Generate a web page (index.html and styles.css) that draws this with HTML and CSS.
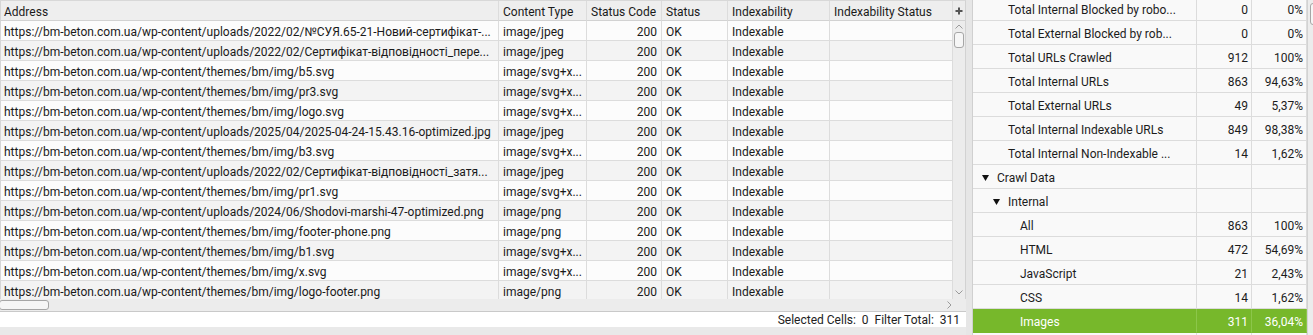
FILE: index.html
```html
<!DOCTYPE html>
<html lang="en">
<head>
  <meta charset="UTF-8" />
  <meta name="viewport" content="width=device-width, initial-scale=1.0" />
  <title>Crawl Results</title>
  <link rel="stylesheet" href="styles.css">
</head>
<body>
  <div class="app">
    <!-- Results table -->
    <section class="results">
      <div class="grid-area">
        <div class="grid">
          <div class="row head">
            <div class="cell">Address</div>
            <div class="cell">Content Type</div>
            <div class="cell">Status Code</div>
            <div class="cell">Status</div>
            <div class="cell">Indexability</div>
            <div class="cell">Indexability Status</div>
          </div>
          <div class="row">
            <div class="cell">https://bm-beton.com.ua/wp-content/uploads/2022/02/№СУЯ.65-21-Новий-сертифікат-...</div>
            <div class="cell">image/jpeg</div><div class="cell num">200</div><div class="cell">OK</div><div class="cell">Indexable</div><div class="cell"></div>
          </div>
          <div class="row">
            <div class="cell">https://bm-beton.com.ua/wp-content/uploads/2022/02/Сертифікат-відповідності_пере...</div>
            <div class="cell">image/jpeg</div><div class="cell num">200</div><div class="cell">OK</div><div class="cell">Indexable</div><div class="cell"></div>
          </div>
          <div class="row">
            <div class="cell">https://bm-beton.com.ua/wp-content/themes/bm/img/b5.svg</div>
            <div class="cell">image/svg+x...</div><div class="cell num">200</div><div class="cell">OK</div><div class="cell">Indexable</div><div class="cell"></div>
          </div>
          <div class="row">
            <div class="cell">https://bm-beton.com.ua/wp-content/themes/bm/img/pr3.svg</div>
            <div class="cell">image/svg+x...</div><div class="cell num">200</div><div class="cell">OK</div><div class="cell">Indexable</div><div class="cell"></div>
          </div>
          <div class="row">
            <div class="cell">https://bm-beton.com.ua/wp-content/themes/bm/img/logo.svg</div>
            <div class="cell">image/svg+x...</div><div class="cell num">200</div><div class="cell">OK</div><div class="cell">Indexable</div><div class="cell"></div>
          </div>
          <div class="row">
            <div class="cell">https://bm-beton.com.ua/wp-content/uploads/2025/04/2025-04-24-15.43.16-optimized.jpg</div>
            <div class="cell">image/jpeg</div><div class="cell num">200</div><div class="cell">OK</div><div class="cell">Indexable</div><div class="cell"></div>
          </div>
          <div class="row">
            <div class="cell">https://bm-beton.com.ua/wp-content/themes/bm/img/b3.svg</div>
            <div class="cell">image/svg+x...</div><div class="cell num">200</div><div class="cell">OK</div><div class="cell">Indexable</div><div class="cell"></div>
          </div>
          <div class="row">
            <div class="cell">https://bm-beton.com.ua/wp-content/uploads/2022/02/Сертифікат-відповідності_затя...</div>
            <div class="cell">image/jpeg</div><div class="cell num">200</div><div class="cell">OK</div><div class="cell">Indexable</div><div class="cell"></div>
          </div>
          <div class="row">
            <div class="cell">https://bm-beton.com.ua/wp-content/themes/bm/img/pr1.svg</div>
            <div class="cell">image/svg+x...</div><div class="cell num">200</div><div class="cell">OK</div><div class="cell">Indexable</div><div class="cell"></div>
          </div>
          <div class="row">
            <div class="cell">https://bm-beton.com.ua/wp-content/uploads/2024/06/Shodovi-marshi-47-optimized.png</div>
            <div class="cell">image/png</div><div class="cell num">200</div><div class="cell">OK</div><div class="cell">Indexable</div><div class="cell"></div>
          </div>
          <div class="row">
            <div class="cell">https://bm-beton.com.ua/wp-content/themes/bm/img/footer-phone.png</div>
            <div class="cell">image/png</div><div class="cell num">200</div><div class="cell">OK</div><div class="cell">Indexable</div><div class="cell"></div>
          </div>
          <div class="row">
            <div class="cell">https://bm-beton.com.ua/wp-content/themes/bm/img/b1.svg</div>
            <div class="cell">image/svg+x...</div><div class="cell num">200</div><div class="cell">OK</div><div class="cell">Indexable</div><div class="cell"></div>
          </div>
          <div class="row">
            <div class="cell">https://bm-beton.com.ua/wp-content/themes/bm/img/x.svg</div>
            <div class="cell">image/svg+x...</div><div class="cell num">200</div><div class="cell">OK</div><div class="cell">Indexable</div><div class="cell"></div>
          </div>
          <div class="row">
            <div class="cell">https://bm-beton.com.ua/wp-content/themes/bm/img/logo-footer.png</div>
            <div class="cell">image/png</div><div class="cell num">200</div><div class="cell">OK</div><div class="cell">Indexable</div><div class="cell"></div>
          </div>
        </div>
        <!-- Vertical scrollbar -->
        <div class="vscroll">
          <div class="corner">
            <svg width="8" height="8" viewBox="0 0 8 8"><path d="M4 0.5v7M0.5 4h7" stroke="#555" stroke-width="2"/></svg>
          </div>
          <div class="track">
            <svg class="chev" width="8" height="5" viewBox="0 0 8 5"><polyline points="0.5,4.5 4,1 7.5,4.5" fill="none" stroke="#9a9a9a"/></svg>
            <span class="thumb"></span>
            <span class="spacer"></span>
            <svg class="chev" width="8" height="5" viewBox="0 0 8 5"><polyline points="0.5,0.5 4,4 7.5,0.5" fill="none" stroke="#9a9a9a"/></svg>
          </div>
        </div>
      </div>
      <!-- Horizontal scrollbar -->
      <div class="hscroll">
        <span class="thumb"></span>
        <svg class="chev" width="5" height="8" viewBox="0 0 5 8"><polyline points="0.5,0.5 4,4 0.5,7.5" fill="none" stroke="#9a9a9a"/></svg>
      </div>
      <div class="statusbar">Selected Cells:&nbsp; 0 &nbsp;Filter Total:&nbsp; 311</div>
    </section>

    <div class="splitter"></div>

    <!-- Overview tree -->
    <section class="overview">
      <div class="tree">
        <div class="trow"><div class="tcell l1">Total Internal Blocked by robo...</div><div class="tcell num">0</div><div class="tcell num">0%</div></div>
        <div class="trow"><div class="tcell l1">Total External Blocked by rob...</div><div class="tcell num">0</div><div class="tcell num">0%</div></div>
        <div class="trow"><div class="tcell l1">Total URLs Crawled</div><div class="tcell num">912</div><div class="tcell num">100%</div></div>
        <div class="trow"><div class="tcell l1">Total Internal URLs</div><div class="tcell num">863</div><div class="tcell num">94,63%</div></div>
        <div class="trow"><div class="tcell l1">Total External URLs</div><div class="tcell num">49</div><div class="tcell num">5,37%</div></div>
        <div class="trow"><div class="tcell l1">Total Internal Indexable URLs</div><div class="tcell num">849</div><div class="tcell num">98,38%</div></div>
        <div class="trow"><div class="tcell l1">Total Internal Non-Indexable ...</div><div class="tcell num">14</div><div class="tcell num">1,62%</div></div>
        <div class="trow"><div class="tcell g0"><span class="toggle"><svg width="7" height="6" viewBox="0 0 7 6"><polygon points="0,0 7,0 3.5,6" fill="#111"/></svg></span>Crawl Data</div><div class="tcell"></div><div class="tcell"></div></div>
        <div class="trow"><div class="tcell g1"><span class="toggle"><svg width="7" height="6" viewBox="0 0 7 6"><polygon points="0,0 7,0 3.5,6" fill="#111"/></svg></span>Internal</div><div class="tcell"></div><div class="tcell"></div></div>
        <div class="trow"><div class="tcell l2">All</div><div class="tcell num">863</div><div class="tcell num">100%</div></div>
        <div class="trow"><div class="tcell l2">HTML</div><div class="tcell num">472</div><div class="tcell num">54,69%</div></div>
        <div class="trow"><div class="tcell l2">JavaScript</div><div class="tcell num">21</div><div class="tcell num">2,43%</div></div>
        <div class="trow"><div class="tcell l2">CSS</div><div class="tcell num">14</div><div class="tcell num">1,62%</div></div>
        <div class="trow selected"><div class="tcell l2">Images</div><div class="tcell num">311</div><div class="tcell num">36,04%</div></div>
        <div class="trow"><div class="tcell l2"></div><div class="tcell"></div><div class="tcell"></div></div>
      </div>
      <div class="rscroll"><span class="thumb"></span></div>
    </section>
  </div>
</body>
</html>
```

FILE: styles.css
```css
/* Global */
body {
  margin: 0;
  height: 335px;
  overflow: hidden;
  background-color: #e9e9e9;
  font-family: Roboto, "Noto Sans", Arial, sans-serif;
  font-size: 12px;
  color: #1a1a1a;
}
.app {
  display: flex;
  height: 335px;
}
/* Results table */
.results {
  width: 966px;
  flex: none;
  display: flex;
  flex-direction: column;
}
.grid-area {
  display: flex;
  height: 299px;
  overflow: hidden;
}
.grid {
  width: 953px;
  flex: none;
  border-top: 1px solid #d8d8d8;
  background-color: #fcfcfc;
}
.row {
  display: grid;
  grid-template-columns: 499px 88px 75px 66px 102px 123px;
  height: 20px;
}
.row:nth-child(odd) {
  background-color: #f3f3f3;
}
.row.head {
  height: 20px;
  background-color: #eeeeee;
}
.cell {
  box-sizing: border-box;
  height: 20px;
  line-height: 22px;
  padding: 0 4px 0 3px;
  border-right: 1px solid #dcdcdc;
  border-bottom: 1px solid #dcdcdc;
  white-space: nowrap;
  overflow: hidden;
}
.row .cell:first-child {
  border-left: 1px solid #d6d6d6;
}
.row .cell:nth-child(n+2) {
  padding-left: 4px;
}
.head .cell {
  border-bottom-color: #d2d2d2;
}
.cell.num {
  text-align: right;
}
/* Vertical scrollbar */
.vscroll {
  width: 13px;
  flex: none;
  display: flex;
  flex-direction: column;
  background-color: #ececec;
}
.corner {
  box-sizing: border-box;
  height: 21px;
  border-top: 1px solid #d8d8d8;
  border-bottom: 1px solid #d2d2d2;
  border-right: 1px solid #d2d2d2;
  display: flex;
  align-items: center;
  justify-content: center;
}
.track {
  flex: 1;
  display: flex;
  flex-direction: column;
  align-items: center;
  padding: 3px 0 4px;
  border-right: 1px solid #d2d2d2;
}
.track .thumb {
  box-sizing: border-box;
  width: 10px;
  height: 16px;
  margin-top: 3px;
  border: 1px solid #a6a6a6;
  border-radius: 3px;
  background-color: #f6f6f6;
}
.track .spacer {
  flex: 1;
}
.chev {
  display: block;
  flex: none;
}
/* Horizontal scrollbar */
.hscroll {
  height: 12px;
  display: flex;
  align-items: center;
  justify-content: space-between;
  padding-right: 14px;
  background-color: #ececec;
  border-bottom: 1px solid #c9c9c9;
}
.hscroll .thumb {
  box-sizing: border-box;
  width: 50px;
  height: 10px;
  margin-left: -1px;
  border: 1px solid #a6a6a6;
  border-radius: 3px;
  background-color: #f6f6f6;
}
/* Status bar */
.statusbar {
  height: 15px;
  line-height: 17px;
  padding-right: 6px;
  text-align: right;
  background-color: #ffffff;
  color: #222;
}
.splitter {
  width: 6px;
  flex: none;
  background-color: #e6e6e6;
}
/* Overview tree */
.overview {
  flex: 1;
  display: flex;
  border-left: 1px solid #d0d0d0;
  background-color: #f9f9f9;
  overflow: hidden;
}
.tree {
  width: 334px;
  flex: none;
  margin-top: -3px;
}
.trow {
  display: grid;
  grid-template-columns: 224px 55px 55px;
  height: 24px;
}
.tcell {
  box-sizing: border-box;
  height: 24px;
  line-height: 26px;
  padding: 0 3px;
  border-right: 1px solid #dcdcdc;
  border-bottom: 1px solid #dcdcdc;
  white-space: nowrap;
  overflow: hidden;
  color: #1c1c1c;
}
.tcell.num {
  text-align: right;
}
.tcell.l1 {
  padding-left: 35px;
}
.tcell.l2 {
  padding-left: 47px;
}
.tcell.g0 {
  padding-left: 9px;
}
.tcell.g1 {
  padding-left: 20px;
}
.toggle {
  display: inline-block;
  width: 15px;
}
.toggle svg {
  display: inline-block;
  vertical-align: 1px;
}
.trow.selected {
  background-color: #77b82b;
}
.trow.selected .tcell {
  color: #ffffff;
  border-right-color: #8cc64a;
  border-bottom-color: #77b82b;
}
.rscroll {
  flex: 1;
  background-color: #ececec;
  border-left: 1px solid #d2d2d2;
  padding: 3px 0 0 2px;
}
.rscroll .thumb {
  display: block;
  box-sizing: border-box;
  width: 10px;
  height: 22px;
  border: 1px solid #a6a6a6;
  border-radius: 3px;
  background-color: #f6f6f6;
}
```
